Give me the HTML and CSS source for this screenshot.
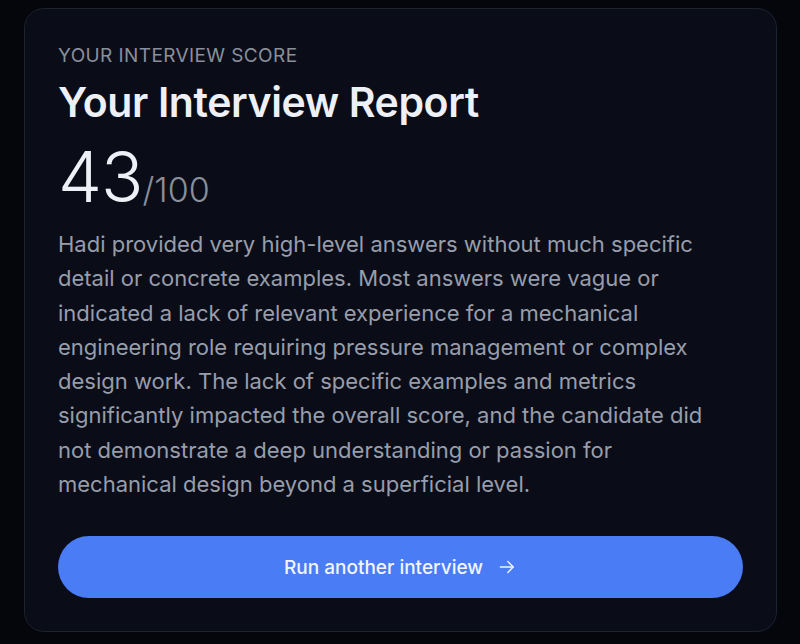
FILE: index.html
```html
<!DOCTYPE html>
<html lang="en">
<head>
    <meta charset="UTF-8">
    <meta name="viewport" content="width=device-width, initial-scale=1.0">
    <title>Interview Report</title>
    <link rel="stylesheet" href="styles.css">
</head>
<body>
    <div class="report-card">
        <p class="eyebrow">YOUR INTERVIEW SCORE</p>
        <h1 class="title">Your Interview Report</h1>
        <div class="score">
            <span class="score-value">43</span><span class="score-max">/100</span>
        </div>
        <p class="summary">Hadi provided very high-level answers without much specific detail or concrete examples. Most answers were vague or indicated a lack of relevant experience for a mechanical engineering role requiring pressure management or complex design work. The lack of specific examples and metrics significantly impacted the overall score, and the candidate did not demonstrate a deep understanding or passion for mechanical design beyond a superficial level.</p>
        <button class="btn-run" type="button">
            Run another interview
            <svg class="arrow" width="20" height="20" viewBox="0 0 24 24" fill="none" stroke="currentColor" stroke-width="1.7" stroke-linecap="round" stroke-linejoin="round">
                <path d="M4 12h15"/>
                <path d="M13 5.5l6.5 6.5-6.5 6.5"/>
            </svg>
        </button>
    </div>
</body>
</html>
```

FILE: styles.css
```css
body{
    margin: 0;
    background-color: #05060c;
    font-family: Inter, "Noto Sans", sans-serif;
    padding: 8px 23px 12px 24px;
}

.report-card{
    background-color: #0a0d18;
    border: 1px solid #1c2230;
    border-radius: 20px;
    padding: 35px 33px 33px 33px;
}

.eyebrow{
    margin: 0;
    color: #8a8f9c;
    font-size: 19px;
    letter-spacing: .4px;
    line-height: 24px;
}

.title{
    margin: 9px 0 0;
    color: #eef0f7;
    font-size: 41px;
    font-weight: 600;
    line-height: 50px;
    letter-spacing: -.4px;
}

.score{
    margin-top: 15px;
    height: 70px;
    display: flex;
    align-items: baseline;
}

.score-value{
    color: #eef0f7;
    font-size: 70px;
    font-weight: 300;
    line-height: 70px;
    letter-spacing: -1px;
}

.score-max{
    color: #8a8f9c;
    font-size: 34px;
    font-weight: 300;
    line-height: 1;
}

/* keeps the wrap a little narrower than the card */
.summary{
    margin: 15px 0 0;
    max-width: 662px;
    color: #989dab;
    font-size: 22px;
    line-height: 34.3px;
}

.btn-run{
    margin-top: 35px;
    width: 100%;
    height: 62px;
    border: 0;
    border-radius: 31px;
    background-color: #4a7cf6;
    color: #f2f5ff;
    font-family: inherit;
    font-size: 19px;
    font-weight: 500;
    display: flex;
    align-items: center;
    justify-content: center;
    gap: 14px;
    cursor: pointer;
}
```
